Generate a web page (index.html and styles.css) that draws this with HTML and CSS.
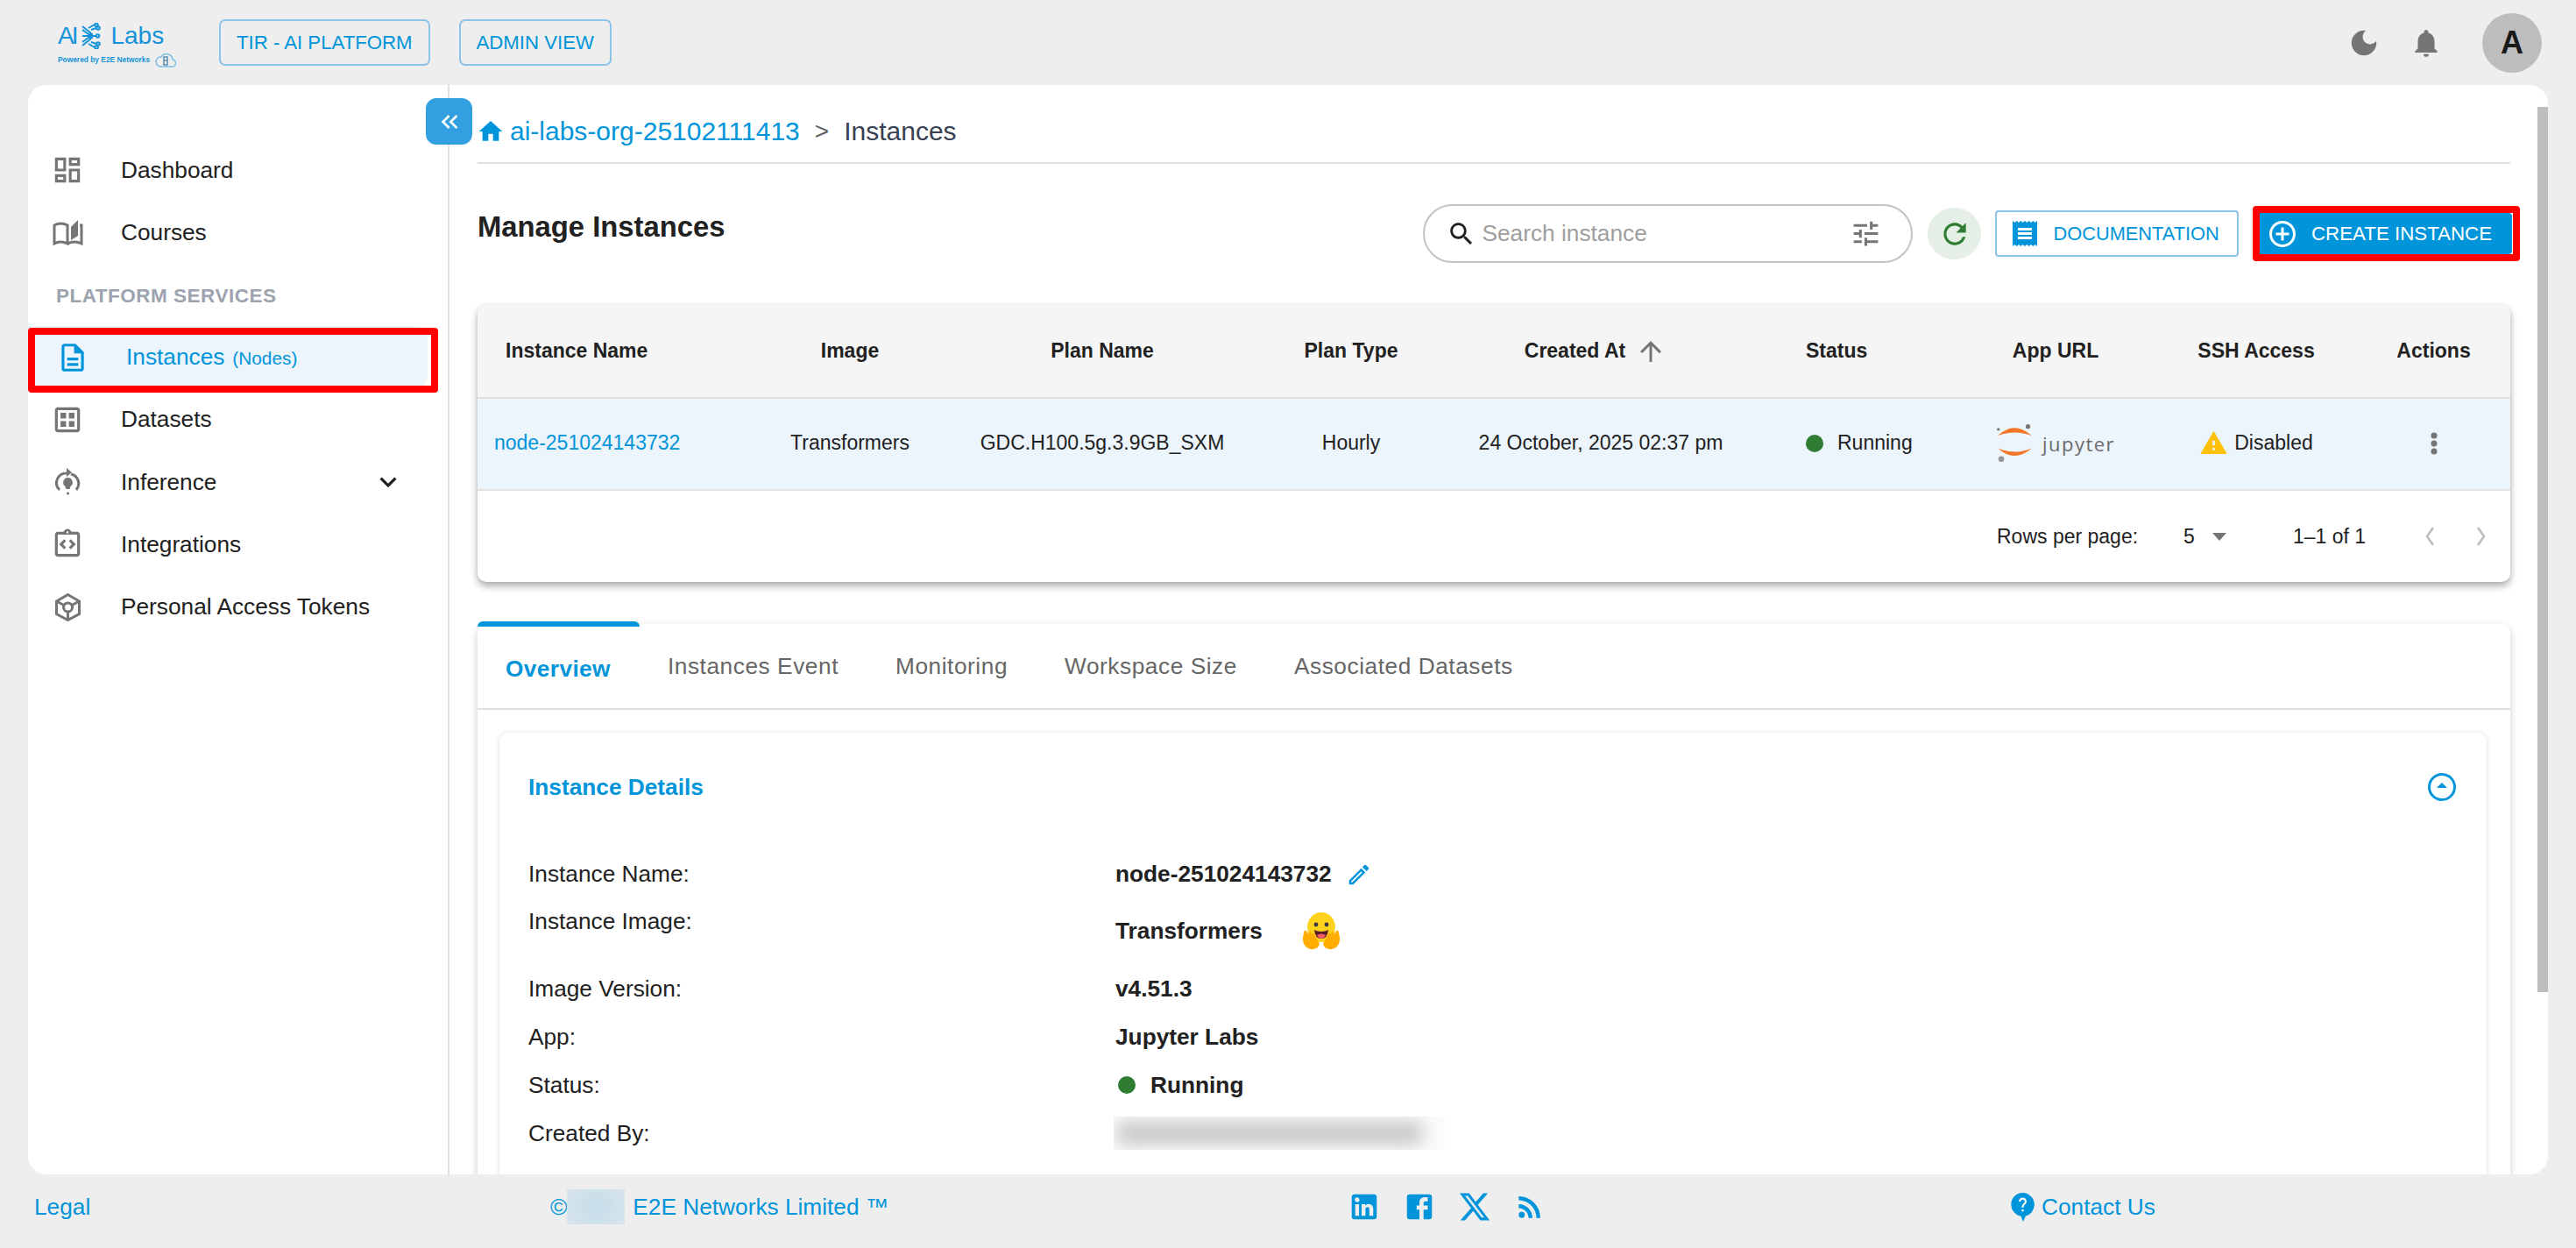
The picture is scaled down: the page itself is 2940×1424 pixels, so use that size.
FILE: index.html
```html
<!DOCTYPE html>
<html lang="en">
<head>
  <meta charset="UTF-8" />
  <title>AI Labs - Instances</title>
  <link rel="stylesheet" href="styles.css">
</head>
<body>
  <header class="topbar">
    <div class="logo">
      <div class="logo-main">
        <span class="logo-ai">AI</span>
        <svg class="logo-mark" viewBox="0 0 22 30" fill="none" stroke="#1493d9" stroke-width="2">
          <path d="M1 8l7 5h5M1 4l10 8M8 6l7-4M1 15h15M1 22l7-5h5M1 26l10-8M8 24l7 4M11 8l6-2M11 22l6 2"/>
          <circle cx="17" cy="2.500" r="1.800"/><circle cx="19" cy="6" r="1.800"/><circle cx="18.500" cy="15" r="1.800"/><circle cx="19" cy="24" r="1.800"/><circle cx="17" cy="28" r="1.800"/>
        </svg>
        <span class="logo-labs">Labs</span>
      </div>
      <div class="logo-sub">
        <span>Powered by E2E Networks</span>
        <svg class="logo-cloud" viewBox="0 0 24 17" fill="none" stroke="#7dbce6" stroke-width="1.5">
          <path d="M6 16h13a4 4 0 0 0 1-8 7 7 0 0 0-13-3 5.500 5.500 0 0 0-1 11z"/><path d="M10 5h4v9h-4zM10 9h4" stroke="#5b8fb3"/>
        </svg>
      </div>
    </div>
    <button class="top-btn tir-btn">TIR - AI PLATFORM</button>
    <button class="top-btn">ADMIN VIEW</button>
    <div class="top-right">
      <svg class="top-icon" viewBox="0 0 24 24"><path d="M12 3c-4.970 0-9 4.030-9 9s4.030 9 9 9 9-4.030 9-9c0-.46-.04-.92-.1-1.360-.98 1.370-2.580 2.260-4.400 2.260-2.980 0-5.400-2.420-5.400-5.400 0-1.810.89-3.420 2.260-4.400-.44-.06-.9-.1-1.360-.1z"/></svg>
      <svg class="top-icon bell" viewBox="0 0 24 24"><path d="M12 22c1.100 0 2-.9 2-2h-4c0 1.100.89 2 2 2zm6-6v-5c0-3.070-1.640-5.640-4.500-6.320V4c0-.83-.67-1.500-1.500-1.500s-1.500.67-1.500 1.500v.68C7.630 5.360 6 7.920 6 11v5l-2 2v1h16v-1l-2-2z"/></svg>
      <div class="avatar">A</div>
    </div>
  </header>

  <div class="panel">
    <button class="collapse-btn">
      <svg viewBox="0 0 24 24"><path d="M17.590 18L19 16.590 14.420 12 19 7.410 17.590 6l-6 6zM11 18l1.410-1.410L7.830 12l4.580-4.590L11 6l-6 6z"/></svg>
    </button>

    <nav class="sidebar">
      <a class="nav-item">
        <span class="nav-icon"><svg viewBox="0 0 24 24"><path d="M19 5v2h-4V5h4M9 5v6H5V5h4m10 8v6h-4v-6h4M9 17v2H5v-2h4M21 3h-8v6h8V3zM11 3H3v10h8V3zm10 8h-8v10h8V11zm-10 4H3v6h8v-6z"/></svg></span>
        Dashboard
      </a>
      <a class="nav-item">
        <span class="nav-icon"><svg class="custom-icon" viewBox="0 0 35 30"><path class="line" d="M2 7Q9 3 17 7V28Q9 24 2 28ZM17 28Q25 24 33 28V7H31"/><path d="M21 9L29 1V19L21 24Z"/></svg></span>
        Courses
      </a>
      <div class="nav-heading">PLATFORM SERVICES</div>
      <a class="nav-item active">
        <span class="nav-icon"><svg viewBox="0 0 24 24"><path d="M8 16h8v2H8zm0-4h8v2H8zm6-10H6c-1.100 0-2 .9-2 2v16c0 1.100.89 2 1.990 2H18c1.100 0 2-.9 2-2V8l-6-6zm4 18H6V4h7v5h5v11z"/></svg></span>
        <span>Instances</span><small>(Nodes)</small>
      </a>
      <a class="nav-item">
        <span class="nav-icon"><svg viewBox="0 0 24 24"><path d="M19 5v14H5V5h14m0-2H5c-1.100 0-2 .9-2 2v14c0 1.100.9 2 2 2h14c1.100 0 2-.9 2-2V5c0-1.100-.9-2-2-2zm-8 8H7V7h4v4zm6 0h-4V7h4v4zm-6 6H7v-4h4v4zm6 0h-4v-4h4v4z"/></svg></span>
        Datasets
      </a>
      <a class="nav-item">
        <span class="nav-icon"><svg class="custom-icon small" viewBox="0 0 29 32"><path class="line" d="M13 6A11 11 0 0 0 5 25M18 7A11 11 0 0 1 24 25"/><path d="M13 0l6 5-6 5zM14.500 11a5.500 5.500 0 0 1 3 10l-1 3h-4l-1-3a5.500 5.500 0 0 1 3-10z"/><circle cx="14.500" cy="29" r="1.600"/></svg></span>
        Inference
        <svg class="nav-chevron" viewBox="0 0 24 24"><path d="M7.410 8.590L12 13.170l4.590-4.580L18 10l-6 6-6-6z"/></svg>
      </a>
      <a class="nav-item">
        <span class="nav-icon"><svg viewBox="0 0 24 24"><path d="M11 14.170 8.830 12 11 9.830 9.590 8.410 6 12l3.590 3.590zm3.410 1.420L18 12l-3.590-3.590L13 9.830 15.170 12 13 14.170z"/><path d="M19 3h-4.180C14.400 1.840 13.300 1 12 1s-2.400.84-2.820 2H5c-.14 0-.27.01-.4.04-.39.08-.74.28-1.010.55-.18.18-.33.4-.43.64-.1.23-.16.49-.16.77v14c0 .27.06.54.16.78s.25.45.43.64c.27.27.62.47 1.010.55.13.02.26.03.4.03h14c1.100 0 2-.9 2-2V5c0-1.100-.9-2-2-2zm0 16H5V5h14v14zM12 2.750c.41 0 .75.34.75.75s-.34.75-.75.75-.75-.34-.75-.75.34-.75.75-.75z"/></svg></span>
        Integrations
      </a>
      <a class="nav-item">
        <span class="nav-icon"><svg class="custom-icon small" viewBox="0 0 29 32"><path class="line" d="M14.500 1.500L27.500 9V23.500L14.500 30.500L1.500 23.500V9ZM14.500 21V30.500M10 13.500L1.500 9M19 13.500L27.500 9"/><circle class="line" cx="14.500" cy="16" r="5"/></svg></span>
        Personal Access Tokens
      </a>
    </nav>

    <main class="content">
      <div class="breadcrumb">
        <svg class="home-icon" viewBox="0 0 24 24"><path d="M10 20v-6h4v6h5v-8h3L12 3 2 12h3v8z"/></svg>
        <a>ai-labs-org-25102111413</a>
        <span class="crumb-sep">&gt;</span>
        <span class="crumb-current">Instances</span>
      </div>

      <div class="toolbar">
        <h1>Manage Instances</h1>
        <div class="toolbar-actions">
          <div class="search">
            <svg class="search-icon" viewBox="0 0 24 24"><path d="M15.500 14h-.79l-.28-.27C15.410 12.590 16 11.110 16 9.500 16 5.910 13.090 3 9.500 3S3 5.910 3 9.500 5.910 16 9.500 16c1.610 0 3.090-.59 4.230-1.570l.27.28v.79l5 4.990L20.490 19l-4.990-5zm-6 0C7.010 14 5 11.990 5 9.500S7.010 5 9.500 5 14 7.010 14 9.500 11.990 14 9.500 14z"/></svg>
            <input type="text" placeholder="Search instance">
            <svg class="tune-icon" viewBox="0 0 24 24"><path d="M3 17v2h6v-2H3zM3 5v2h10V5H3zm10 16v-2h8v-2h-8v-2h-2v6h2zM7 9v2H3v2h4v2h2V9H7zm14 4v-2H11v2h10zm-6-4h2V7h4V5h-4V3h-2v6z"/></svg>
          </div>
          <button class="refresh-btn">
            <svg viewBox="0 0 24 24"><path d="M17.650 6.350C16.200 4.900 14.210 4 12 4c-4.420 0-7.990 3.580-7.990 8s3.570 8 7.990 8c3.730 0 6.840-2.550 7.730-6h-2.080c-.82 2.330-3.040 4-5.650 4-3.310 0-6-2.690-6-6s2.690-6 6-6c1.660 0 3.140.69 4.220 1.780L13 11h7V4l-2.350 2.350z"/></svg>
          </button>
          <button class="doc-btn">
            <svg viewBox="0 0 28 29"><path class="doc-sheet" d="M0 0l2.300 2 2.300-2 2.400 2 2.300-2 2.300 2 2.400-2 2.300 2 2.300-2 2.400 2 2.300-2 2.400 2L28 0v29l-2.300-2-2.400 2-2.300-2-2.400 2-2.300-2-2.300 2-2.400-2-2.300 2-2.300-2-2.400 2-2.300-2L0 29z"/><path class="doc-lines" d="M6 8h16v3H6zM6 13h16v3H6zM6 18h16v3H6z"/></svg>
            DOCUMENTATION
          </button>
          <div class="create-wrap">
            <button class="create-btn">
              <svg viewBox="0 0 24 24"><path d="M13 7h-2v4H7v2h4v4h2v-4h4v-2h-4V7zm-1-5C6.490 2 2 6.490 2 12s4.490 10 10 10 10-4.490 10-10S17.510 2 12 2zm0 18c-4.410 0-8-3.590-8-8s3.590-8 8-8 8 3.590 8 8-3.590 8-8 8z"/></svg>
              CREATE INSTANCE
            </button>
          </div>
        </div>
      </div>

      <section class="table-card">
        <div class="table-row table-head">
          <div class="cell cell-name">Instance Name</div>
          <div class="cell">Image</div>
          <div class="cell">Plan Name</div>
          <div class="cell">Plan Type</div>
          <div class="cell cell-created">Created At
            <svg class="sort-icon" viewBox="0 0 24 24"><path d="M4 12l1.410 1.410L11 7.830V20h2V7.830l5.580 5.590L20 12l-8-8-8 8z"/></svg>
          </div>
          <div class="cell cell-status">Status</div>
          <div class="cell">App URL</div>
          <div class="cell">SSH Access</div>
          <div class="cell cell-actions">Actions</div>
        </div>
        <div class="table-row table-body">
          <div class="cell cell-name"><a>node-251024143732</a></div>
          <div class="cell">Transformers</div>
          <div class="cell">GDC.H100.5g.3.9GB_SXM</div>
          <div class="cell">Hourly</div>
          <div class="cell">24 October, 2025 02:37 pm</div>
          <div class="cell cell-status"><span class="dot"></span>Running</div>
          <div class="cell">
            <svg class="jupyter-mark" viewBox="237 72 123 133">
              <path fill="#f37726" d="M243 112Q300 58 360 112Q300 90 243 112ZM243 155Q300 207 360 155Q300 180 243 155Z"/>
              <circle cx="347" cy="80" r="8" fill="#767677"/><circle cx="245" cy="90" r="5" fill="#767677"/><circle cx="255" cy="192" r="10" fill="#989798"/>
            </svg>
            <span class="jupyter-text">jupyter</span>
          </div>
          <div class="cell cell-ssh">
            <svg class="warn-icon" viewBox="0 0 24 24"><path d="M1 21h22L12 2 1 21zm12-3h-2v-2h2v2zm0-4h-2v-4h2v4z"/></svg>
            Disabled
          </div>
          <div class="cell cell-actions">
            <svg class="kebab" viewBox="0 0 8 26"><circle cx="4" cy="4" r="3.500"/><circle cx="4" cy="13" r="3.500"/><circle cx="4" cy="22" r="3.500"/></svg>
          </div>
        </div>
        <div class="table-foot">
          <span class="rows-label">Rows per page:</span>
          <span class="rows-value">5</span>
          <span class="rows-arrow"></span>
          <span class="rows-range">1–1 of 1</span>
          <svg class="page-arrow" viewBox="0 0 12 24"><path d="M10 2L3 12l7 10"/></svg>
          <svg class="page-arrow next" viewBox="0 0 12 24"><path d="M2 2l7 10-7 10"/></svg>
        </div>
      </section>

      <section class="tabs-card">
        <div class="tabs">
          <a class="tab active">Overview</a>
          <a class="tab">Instances Event</a>
          <a class="tab">Monitoring</a>
          <a class="tab">Workspace Size</a>
          <a class="tab">Associated Datasets</a>
        </div>
        <div class="details-card">
          <div class="details-head">
            <h2>Instance Details</h2>
            <svg class="collapse-icon" viewBox="0 0 32 32"><circle cx="16" cy="16" r="14.500"/><path class="tri" d="M10 17l6-6 6 6z"/></svg>
          </div>
          <div class="detail-row">
            <span class="detail-label">Instance Name:</span>
            <span class="detail-value">node-251024143732
              <svg class="edit-icon" viewBox="0 0 24 24"><path d="M3 17.250V21h3.750L17.810 9.940l-3.750-3.750L3 17.250zM5.920 19H5v-.92l9.060-9.060.92.92L5.920 19zM20.710 5.630l-2.340-2.340a1 1 0 0 0-1.410 0l-1.830 1.830 3.750 3.750 1.830-1.830a1 1 0 0 0 0-1.410z"/></svg>
            </span>
          </div>
          <div class="detail-row image-row">
            <span class="detail-label">Instance Image:</span>
            <span class="detail-value">Transformers
              <svg class="hug-icon" viewBox="0 0 46 43">
                <ellipse cx="23" cy="17" rx="16" ry="17" fill="#ffd21e"/>
                <circle cx="17" cy="14" r="2.400" fill="#3a3b45"/><circle cx="29" cy="14" r="2.400" fill="#3a3b45"/>
                <path d="M15 20Q23 24 31 20Q30 30 23 30Q16 30 15 20Z" fill="#5c1d2b"/><path d="M18 26Q23 23 28 26Q26 30 23 30Q20 30 18 26Z" fill="#f45b6a"/>
                <path d="M3 24Q1 30 3 36Q7 43 14 42Q20 41 21 36L15 25Q13 22 12 26L11 22Q9 20 8 25L6 21Q3 20 3 24Z" fill="#ffad03"/>
                <path d="M43 24Q45 30 43 36Q39 43 32 42Q26 41 25 36L31 25Q33 22 34 26L35 22Q37 20 38 25L40 21Q43 20 43 24Z" fill="#ffad03"/>
              </svg>
            </span>
          </div>
          <div class="detail-row">
            <span class="detail-label">Image Version:</span>
            <span class="detail-value">v4.51.3</span>
          </div>
          <div class="detail-row">
            <span class="detail-label">App:</span>
            <span class="detail-value">Jupyter Labs</span>
          </div>
          <div class="detail-row">
            <span class="detail-label">Status:</span>
            <span class="detail-value"><span class="dot"></span>Running</span>
          </div>
          <div class="detail-row">
            <span class="detail-label">Created By:</span>
            <span class="blurred"><span class="blurred-text"></span></span>
          </div>
        </div>
      </section>
    </main>

    <div class="scroll-thumb"></div>
  </div>

  <footer class="footer">
    <a class="footer-legal">Legal</a>
    <div class="footer-copy">©<span class="year-blur"></span>E2E Networks Limited ™</div>
    <div class="footer-social">
      <svg class="social-icon" viewBox="0 0 24 24"><path d="M19 3a2 2 0 0 1 2 2v14a2 2 0 0 1-2 2H5a2 2 0 0 1-2-2V5a2 2 0 0 1 2-2h14m-.5 15.500v-5.300a3.260 3.260 0 0 0-3.260-3.260c-.85 0-1.840.52-2.320 1.300v-1.110h-2.790v8.370h2.790v-4.930c0-.77.62-1.400 1.390-1.400a1.400 1.400 0 0 1 1.400 1.400v4.930h2.790M6.880 8.560a1.680 1.680 0 0 0 1.680-1.680c0-.93-.75-1.690-1.680-1.690a1.690 1.690 0 0 0-1.690 1.690c0 .93.76 1.680 1.690 1.680m1.390 9.940v-8.370H5.500v8.370h2.770z"/></svg>
      <svg class="social-icon" viewBox="0 0 24 24"><path d="M5 3h14a2 2 0 0 1 2 2v14a2 2 0 0 1-2 2H5a2 2 0 0 1-2-2V5a2 2 0 0 1 2-2m13 2h-2.500A3.500 3.500 0 0 0 12 8.500V11h-2v3h2v7h3v-7h3v-3h-3V9a1 1 0 0 1 1-1h2V5z"/></svg>
      <svg class="social-icon" viewBox="0 0 24 24"><path d="M18.244 2.250h3.308l-7.227 8.260 8.502 11.240H16.170l-5.214-6.817L4.990 21.750H1.680l7.730-8.835L1.254 2.250H8.080l4.713 6.231zm-1.161 17.520h1.833L7.084 4.126H5.117z"/></svg>
      <svg class="social-icon" viewBox="0 0 24 24"><circle cx="6.180" cy="17.820" r="2.180"/><path d="M4 4.440v2.830c7.030 0 12.730 5.700 12.730 12.730h2.830c0-8.590-6.970-15.560-15.560-15.560zm0 5.660v2.830c3.900 0 7.070 3.170 7.070 7.070h2.830c0-5.470-4.430-9.900-9.900-9.900z"/></svg>
    </div>
    <a class="footer-contact">
      <svg class="help-icon" viewBox="0 0 24 29.500"><path class="help-bubble" d="M12 0a12 12 0 0 1 3 23.600L12.500 29.500 10 23.800A12 12 0 0 1 12 0z"/><path class="help-mark" d="M13 19h-2v-2h2v2zm2.070-7.750l-.9.92C13.450 12.900 13 13.500 13 15h-2v-.5c0-1.100.45-2.100 1.170-2.830l1.240-1.260c.37-.36.59-.86.59-1.410 0-1.100-.9-2-2-2s-2 .9-2 2H8c0-2.210 1.790-4 4-4s4 1.790 4 4c0 .88-.36 1.680-.93 2.250z"/></svg>
      Contact Us
    </a>
  </footer>
</body>
</html>
```

FILE: styles.css
```css
*, *::before, *::after {
  box-sizing: border-box;
}

html, body {
  margin: 0;
  padding: 0;
}

body {
  width: 2940px;
  height: 1424px;
  overflow: hidden;
  display: flex;
  flex-direction: column;
  background-color: #eeeeee;
  color: #212121;
  font-family: "Liberation Sans", Arial, sans-serif;
  font-size: 26.25px;
}

svg {
  display: block;
  flex-shrink: 0;
}

button {
  font-family: inherit;
  cursor: pointer;
}

/* top bar */

.topbar {
  height: 97px;
  flex-shrink: 0;
  display: flex;
  align-items: center;
  padding: 0 39px 0 66px;
}

.logo {
  width: 122px;
  margin-right: 62px;
  color: #1493d9;
}

.logo-main {
  display: flex;
  align-items: center;
  height: 32px;
  font-size: 28px;
  margin-top: 4px;
}

.logo-ai {
  letter-spacing: -3px;
}

.logo-mark {
  width: 22px;
  height: 30px;
  margin-left: 7px;
}

.logo-labs {
  margin-left: 11px;
}

.logo-sub {
  display: flex;
  align-items: center;
  gap: 6px;
  height: 17px;
  margin-top: 3px;
  font-size: 8.4px;
  font-weight: bold;
  white-space: nowrap;
}

.logo-cloud {
  width: 24px;
  height: 17px;
}

.top-btn {
  height: 53px;
  padding: 0 18px;
  margin-right: 33px;
  background: transparent;
  border: 2px solid #8dc3e8;
  border-radius: 7px;
  color: #0095da;
  font-size: 22.2px;
  white-space: nowrap;
}

.top-right {
  margin-left: auto;
  display: flex;
  align-items: center;
}

.top-icon {
  width: 38px;
  height: 38px;
  fill: #757575;
}

.bell {
  margin-left: 33px;
  margin-right: 45px;
}

.avatar {
  width: 68px;
  height: 68px;
  border-radius: 50%;
  background: #bdbdbd;
  color: #1a1a1a;
  font-size: 36px;
  font-weight: bold;
  display: flex;
  align-items: center;
  justify-content: center;
}

/* main white panel */

.panel {
  position: relative;
  flex-shrink: 0;
  height: 1243px;
  margin: 0 32px;
  display: flex;
  background: white;
  border-radius: 21px;
  overflow: hidden;
}

.collapse-btn {
  position: absolute;
  top: 15px;
  left: 454px;
  z-index: 2;
  width: 53px;
  height: 53px;
  padding: 0;
  border: none;
  border-radius: 12px;
  background: #319fe0;
  display: flex;
  align-items: center;
  justify-content: center;
}

.collapse-btn svg {
  width: 32px;
  height: 32px;
  fill: white;
}

.scroll-thumb {
  position: absolute;
  top: 25px;
  right: 0;
  width: 12px;
  height: 1010px;
  background: #bdbdbd;
}

/* sidebar */

.sidebar {
  width: 481px;
  flex-shrink: 0;
  padding-top: 61.4px;
  border-right: 2px solid #e0e0e0;
}

.nav-item {
  position: relative;
  height: 71.25px;
  display: flex;
  align-items: center;
  padding-left: 26px;
  color: #212121;
}

.nav-icon {
  width: 38px;
  height: 38px;
  margin-right: 42px;
  display: flex;
  align-items: center;
  justify-content: center;
}

.nav-icon svg {
  width: 38px;
  height: 38px;
  fill: #757575;
}

.nav-icon .custom-icon {
  width: 35px;
  height: 30px;
}

.nav-icon .custom-icon.small {
  width: 29px;
  height: 32px;
}

.line {
  fill: none;
  stroke: #757575;
  stroke-width: 3;
}

.nav-chevron {
  width: 38px;
  height: 38px;
  margin-left: auto;
  margin-right: 49px;
  fill: #212121;
}

.nav-heading {
  height: 71px;
  display: flex;
  align-items: center;
  padding: 3px 0 0 32px;
  color: #9ca3af;
  font-size: 22.5px;
  font-weight: bold;
  letter-spacing: 0.5px;
}

.nav-item.active {
  margin-right: 23px;
  padding-left: 32px;
  background: #ecf4fc;
  border-radius: 0 14px 14px 0;
  color: #0095da;
}

.nav-item.active .nav-icon svg {
  fill: #0095da;
}

.nav-item.active small {
  margin-left: 9px;
  margin-top: 2px;
  font-size: 20.8px;
}

.nav-item.active::after {
  content: "";
  position: absolute;
  top: 2px;
  left: 0;
  width: 468px;
  height: 74px;
  border: 8px solid #ff0000;
  border-radius: 4px;
}

/* content */

.content {
  flex: 1;
  min-width: 0;
  padding: 0 43px 0 32px;
}

.breadcrumb {
  height: 90px;
  padding-top: 18px;
  display: flex;
  align-items: center;
  border-bottom: 2px solid #e0e0e0;
  font-size: 30px;
  color: #0095da;
}

.home-icon {
  width: 32px;
  height: 32px;
  margin-left: -1px;
  margin-right: 6px;
  fill: #0095da;
}

.crumb-sep {
  margin: 0 17px;
  color: #616161;
  font-size: 28px;
}

.crumb-current {
  color: #374151;
}

.toolbar {
  height: 161px;
  padding-top: 46px;
  display: flex;
  justify-content: space-between;
  align-items: flex-start;
}

.toolbar h1 {
  margin: 6px 0 0;
  font-size: 32.8px;
  line-height: 40px;
}

.toolbar-actions {
  display: flex;
  align-items: center;
  gap: 16.5px;
  margin-right: -11px;
}

.search {
  width: 559px;
  height: 67px;
  margin-right: 1px;
  display: flex;
  align-items: center;
  padding: 0 33px 0 25px;
  border: 2px solid #c4c4c4;
  border-radius: 34px;
}

.search-icon {
  width: 34px;
  height: 34px;
  margin-right: 7px;
  fill: #212121;
}

.search input {
  flex: 1;
  min-width: 0;
  border: none;
  outline: none;
  padding: 0;
  background: transparent;
  font-family: inherit;
  font-size: 26.25px;
}

.search input::placeholder {
  color: #9e9e9e;
  opacity: 1;
}

.tune-icon {
  width: 37px;
  height: 37px;
  fill: #757575;
}

.refresh-btn {
  width: 61px;
  height: 59px;
  margin-right: -1px;
  padding: 0;
  border: none;
  border-radius: 50%;
  background: #e5efe6;
  display: flex;
  align-items: center;
  justify-content: center;
}

.refresh-btn svg {
  width: 38px;
  height: 38px;
  fill: #2e7d32;
}

.doc-btn {
  width: 278px;
  height: 53px;
  padding: 0 0 0 18px;
  display: flex;
  align-items: center;
  gap: 19px;
  background: white;
  border: 2px solid #8dc3e8;
  border-radius: 4px;
  color: #0095da;
  font-size: 21.8px;
}

.doc-btn svg {
  width: 28px;
  height: 29px;
}

.doc-sheet {
  fill: #0095da;
}

.doc-lines {
  fill: white;
}

.create-wrap {
  border: 8px solid #ff0000;
  border-radius: 4px;
  width: 305px;
  height: 63px;
  background: white;
}

.create-btn {
  width: 288px;
  height: 47px;
  padding: 0 0 0 8px;
  display: flex;
  align-items: center;
  gap: 15px;
  border: none;
  border-radius: 0 4px 4px 0;
  background: #0095da;
  color: white;
  font-size: 22.3px;
  white-space: nowrap;
}

.create-btn svg {
  width: 36px;
  height: 36px;
  fill: white;
}

/* instances table */

.table-card {
  height: 316px;
  border-radius: 10px;
  background: white;
  overflow: hidden;
  box-shadow: 0 5px 9px rgba(0, 0, 0, 0.3), 0 0 6px rgba(0, 0, 0, 0.08);
}

.table-row {
  display: grid;
  grid-template-columns: 285px 280px 296px 272px 298px 224px 292px 166px 207px;
  border-bottom: 2px solid #e0e0e0;
  font-size: 23px;
}

.table-head {
  height: 107px;
  background: #f5f5f5;
  font-weight: bold;
}

.table-body {
  height: 105px;
  padding-bottom: 2px;
  background: #ecf4fc;
}

.table-body a {
  color: #0095da;
}

.cell {
  display: flex;
  align-items: center;
  justify-content: center;
  white-space: nowrap;
}

.cell-name {
  justify-content: flex-start;
  padding-left: 32px;
}

.table-body .cell-name {
  padding-left: 19px;
}

.cell-created {
  padding-right: 12px;
}

.sort-icon {
  width: 36px;
  height: 36px;
  margin-left: 11px;
  fill: #757575;
}

.cell-status {
  justify-content: flex-start;
  padding-left: 85px;
}

.cell-actions {
  padding-left: 32px;
}

.dot {
  width: 20px;
  height: 20px;
  margin-right: 16px;
  border-radius: 50%;
  background: #2e7d32;
  flex-shrink: 0;
}

.jupyter-mark {
  width: 41px;
  height: 44px;
  margin-right: 12px;
}

.jupyter-text {
  font-family: "Open Sans", sans-serif;
  color: #6b6b6b;
  font-size: 22px;
  letter-spacing: 1.5px;
}

.warn-icon {
  width: 33px;
  height: 33px;
  margin-right: 7px;
  fill: #ffc107;
}

.kebab {
  width: 8px;
  height: 26px;
  fill: #757575;
}

.table-foot {
  height: 104px;
  display: flex;
  align-items: center;
  font-size: 23px;
}

.rows-label {
  margin-left: 1734px;
}

.rows-value {
  margin-left: 52px;
}

.rows-arrow {
  margin-left: 20px;
  width: 0;
  height: 0;
  border-left: 8.500px solid transparent;
  border-right: 8.500px solid transparent;
  border-top: 9px solid #757575;
}

.rows-range {
  margin-left: 76px;
}

.page-arrow {
  width: 12px;
  height: 24px;
  margin-left: 67px;
  fill: none;
  stroke: #bdbdbd;
  stroke-width: 2.5;
}

.page-arrow.next {
  margin-left: 47px;
}

/* tabs + details */

.tabs-card {
  height: 700px;
  margin-top: 48px;
  border-radius: 10px 10px 0 0;
  background: white;
  box-shadow: 0 3px 10px rgba(0, 0, 0, 0.2);
}

.tabs {
  height: 98px;
  display: flex;
  align-items: center;
  gap: 65px;
  padding: 0 0 0 32px;
  border-bottom: 2px solid #e0e0e0;
  color: #666666;
  letter-spacing: 0.55px;
}

.tab {
  position: relative;
}

.tab.active {
  margin-top: 7px;
  color: #0095da;
  font-weight: bold;
  letter-spacing: 0.4px;
}

.tab.active::before {
  content: "";
  position: absolute;
  top: -39px;
  left: -32px;
  right: -33px;
  height: 6px;
  border-radius: 7px 7px 0 0;
  background: #0095da;
}

.details-card {
  height: 600px;
  margin: 26px 27px 0 25px;
  padding: 0 33px;
  border-radius: 10px;
  background: white;
  box-shadow: 0 1px 6px rgba(0, 0, 0, 0.14);
}

.details-head {
  height: 124px;
  margin-bottom: 10.500px;
  display: flex;
  align-items: center;
  justify-content: space-between;
}

.details-head h2 {
  margin: 0;
  color: #0095da;
  font-size: 26.25px;
}

.collapse-icon {
  width: 32px;
  height: 32px;
  margin-right: 2px;
  fill: none;
  stroke: #0095da;
  stroke-width: 3;
}

.collapse-icon .tri {
  fill: #0095da;
  stroke: none;
}

.detail-row {
  height: 54.8px;
  display: flex;
  align-items: center;
}

.detail-label {
  width: 670px;
  flex-shrink: 0;
}

.detail-value {
  display: flex;
  align-items: center;
  font-weight: bold;
}

.detail-value .dot {
  margin-left: 3px;
  margin-right: 17px;
}

.edit-icon {
  width: 30px;
  height: 30px;
  margin-left: 16px;
  fill: #0095da;
}

.image-row {
  height: 76px;
  align-items: flex-start;
}

.image-row .detail-label {
  line-height: 53px;
}

.image-row .detail-value {
  height: 74px;
}

.hug-icon {
  width: 46px;
  height: 43px;
  margin-left: 44px;
}

.blurred {
  width: 378px;
  height: 38px;
  margin-left: -2px;
  padding: 6px 26px 6px 4px;
  background: #fbfbfb;
  overflow: hidden;
}

.blurred-text {
  display: block;
  height: 26px;
  background: #c6c6c6;
  filter: blur(10px);
}

/* footer */

.footer {
  height: 76px;
  display: flex;
  align-items: center;
  padding: 0 0 2px 39px;
  color: #0095da;
}

.footer-legal {
  width: 589px;
}

.footer-copy {
  width: 910px;
  display: flex;
  align-items: center;
}

.year-blur {
  width: 66px;
  height: 40px;
  margin: 0 9px 0 0;
  background: radial-gradient(circle, #c6dde9, #d7e5ed);
}

.footer-social {
  width: 757px;
  display: flex;
  align-items: center;
  gap: 25px;
}

.social-icon {
  width: 38px;
  height: 38px;
  fill: #0095da;
}

.footer-contact {
  display: flex;
  align-items: center;
  gap: 8px;
}

.help-icon {
  width: 27px;
  height: 33px;
}

.help-bubble {
  fill: #0095da;
}

.help-mark {
  fill: white;
}
```
